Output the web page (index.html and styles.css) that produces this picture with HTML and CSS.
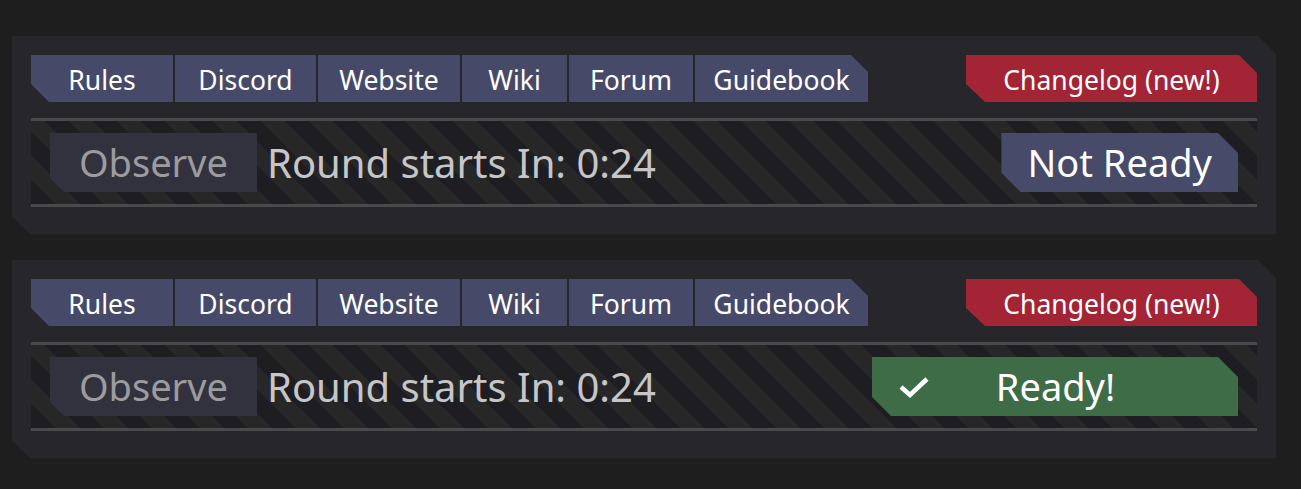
FILE: index.html
```html
<!DOCTYPE html>
<html lang="en">
<head>
    <meta charset="UTF-8">
    <meta name="viewport" content="width=device-width, initial-scale=1.0">
    <title>Lobby</title>
    <link rel="stylesheet" href="styles.css">
</head>
<body>
    <!-- Lobby panel: not ready -->
    <div class="panel">
        <nav class="links">
            <div class="tabs">
                <a class="tab tab-first">Rules</a>
                <a class="tab">Discord</a>
                <a class="tab">Website</a>
                <a class="tab">Wiki</a>
                <a class="tab">Forum</a>
                <a class="tab tab-last">Guidebook</a>
            </div>
            <a class="changelog">Changelog (new!)</a>
        </nav>
        <div class="status">
            <button class="observe">Observe</button>
            <span class="countdown">Round starts In: 0:24</span>
            <button class="ready-btn">Not Ready</button>
        </div>
    </div>

    <!-- Lobby panel: ready -->
    <div class="panel">
        <nav class="links">
            <div class="tabs">
                <a class="tab tab-first">Rules</a>
                <a class="tab">Discord</a>
                <a class="tab">Website</a>
                <a class="tab">Wiki</a>
                <a class="tab">Forum</a>
                <a class="tab tab-last">Guidebook</a>
            </div>
            <a class="changelog">Changelog (new!)</a>
        </nav>
        <div class="status">
            <button class="observe">Observe</button>
            <span class="countdown">Round starts In: 0:24</span>
            <button class="ready-btn is-ready">
                <svg class="check" width="30" height="22" viewBox="0 0 30 22">
                    <path d="M2 11 L11 19 L28 3" fill="none" stroke="#fff" stroke-width="4.5"/>
                </svg>
                <span>Ready!</span>
                <span></span>
            </button>
        </div>
    </div>
</body>
</html>
```

FILE: styles.css
```css
body {
    margin: 0;
    padding: 36px 0 0 12px;
    background-color: #1e1e1e;
    font-family: "Noto Sans", "Open Sans", sans-serif;
    color: #fff;
}
.panel {
    width: 1226px;
    height: 160px;
    padding: 19px 19px;
    margin-bottom: 26px;
    background: #26262b;
    clip-path: polygon(0 0, calc(100% - 18px) 0, 100% 18px, 100% 100%, 18px 100%, 0 calc(100% - 18px));
}
.links {
    display: flex;
    justify-content: space-between;
    height: 47px;
}
.tabs {
    display: grid;
    grid-template-columns: 142px 141px 142px 105px 124px 173px;
    gap: 2px;
}
.tab, .changelog {
    display: flex;
    align-items: center;
    justify-content: center;
    background: #464a68;
    font-size: 26.5px;
    padding-top: 3px;
}
.tab-first {
    clip-path: polygon(0 0, 100% 0, 100% 100%, 18px 100%, 0 calc(100% - 18px));
}
.tab-last {
    clip-path: polygon(0 0, calc(100% - 17px) 0, 100% 17px, 100% 100%, 0 100%);
}
.changelog {
    width: 291px;
    background: #a22435;
    clip-path: polygon(0 0, calc(100% - 18px) 0, 100% 18px, 100% 100%, 19px 100%, 0 calc(100% - 18px));
}
.status {
    display: flex;
    align-items: center;
    margin-top: 16px;
    height: 83px;
    padding: 0 19px;
    border-top: 3px solid #4a4a4c;
    border-bottom: 3px solid #4a4a4c;
    background: repeating-linear-gradient(45deg, #1e1e22 0 17px, #272728 17px 34px);
}
.observe, .ready-btn {
    height: 59px;
    border: none;
    font-family: inherit;
    font-size: 38px;
    padding: 0 26px 1px;
}
.observe {
    width: 207px;
    background: #32323e;
    color: #9c9c9e;
    clip-path: polygon(0 0, 100% 0, 100% 100%, 14px 100%, 0 calc(100% - 14px));
}
.countdown {
    flex: 1;
    margin-left: 10px;
    font-size: 40px;
    color: #c6c6c8;
    padding-bottom: 1px;
}
.ready-btn {
    background: #474a69;
    color: #fff;
    clip-path: polygon(0 0, calc(100% - 20px) 0, 100% 20px, 100% 100%, 19px 100%, 0 calc(100% - 19px));
}
.ready-btn.is-ready {
    width: 366px;
    background: #3e6c46;
    padding-left: 27px;
    display: grid;
    grid-template-columns: 1fr auto 1fr;
    align-items: center;
}
.check {
    margin-top: 2px;
}
```
